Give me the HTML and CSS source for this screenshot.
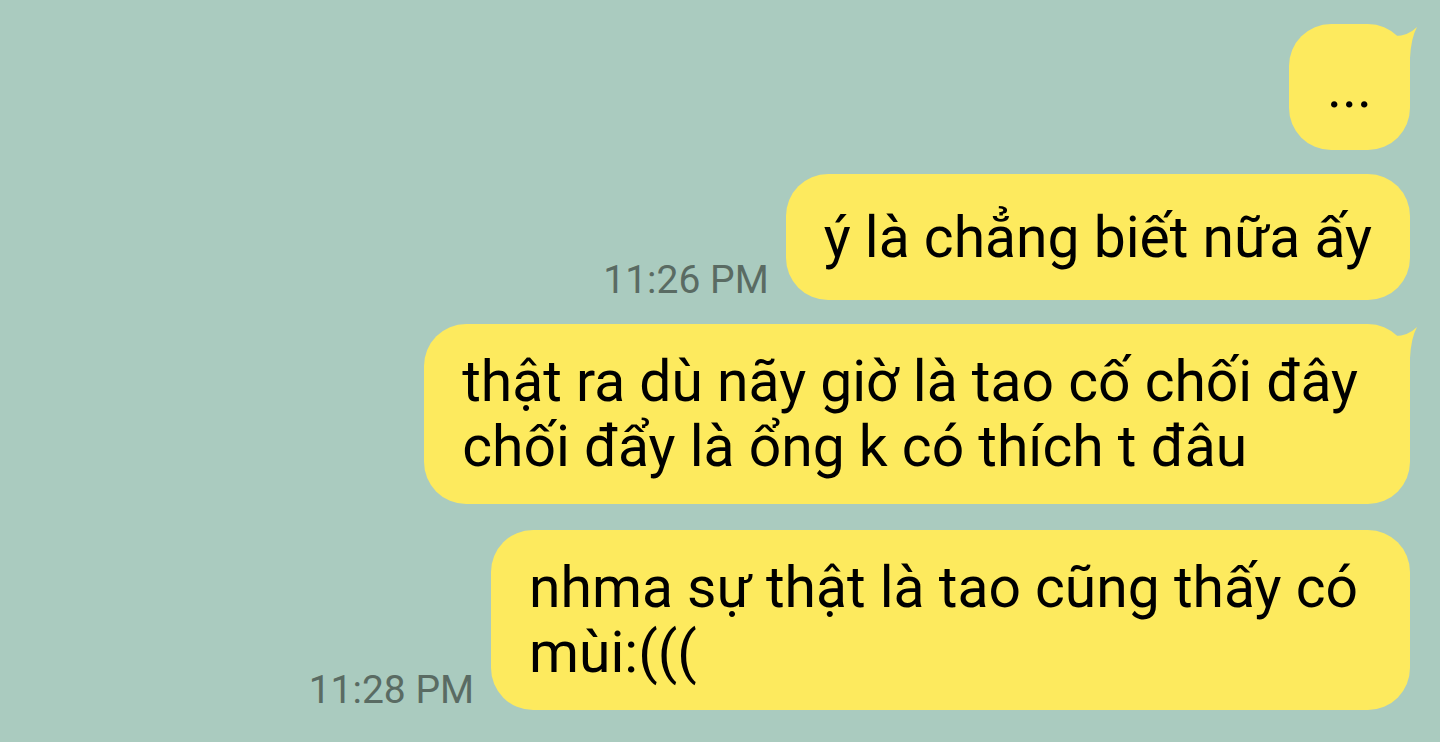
FILE: index.html
```html
<!DOCTYPE html>
<html lang="vi">
<head>
    <meta charset="UTF-8">
    <meta name="viewport" content="width=device-width, initial-scale=1.0">
    <title>Chat</title>
    <link rel="stylesheet" href="styles.css">
</head>
<body>
    <div class="chat">
        <div class="row">
            <div class="bubble">
                <svg class="tail" width="48" height="46" viewBox="0 0 48 46"><path d="M18 16 L25 12 Q38 12 47 3 Q41 14 40 34 L40 44 L18 44 Z"/></svg>
                ...
            </div>
        </div>
        <div class="row">
            <span class="time">11:26 PM</span>
            <div class="bubble">ý là chẳng biết nữa ấy</div>
        </div>
        <div class="row">
            <div class="bubble multi">
                <svg class="tail" width="48" height="46" viewBox="0 0 48 46"><path d="M18 16 L25 12 Q38 12 47 3 Q41 14 40 34 L40 44 L18 44 Z"/></svg>
                thật ra dù nãy giờ là tao cố chối đây<br>chối đẩy là ổng k có thích t đâu
            </div>
        </div>
        <div class="row last">
            <span class="time">11:28 PM</span>
            <div class="bubble multi">nhma sự thật là tao cũng thấy có<br>mùi:(((</div>
        </div>
    </div>
</body>
</html>
```

FILE: styles.css
```css
html, body {
    height: 100%;
}

body {
    margin: 0;
    background: #aacbbf;
    font-family: Roboto, 'Noto Sans', sans-serif;
    overflow: hidden;
}

.chat {
    display: flex;
    flex-direction: column;
    align-items: flex-end;
    gap: 24px;
    padding: 24px 30px 0 0;
}

.row {
    display: flex;
    align-items: flex-end;
    gap: 17px;
}

.row.last {
    margin-top: 2px;
}

.time {
    font-size: 39px;
    line-height: 1;
    color: #5a6b63;
    white-space: nowrap;
}

.bubble {
    position: relative;
    display: flex;
    align-items: center;
    box-sizing: border-box;
    min-height: 126px;
    padding: 25px 38px;
    background: #fdea5e;
    border-radius: 42px;
    color: #000;
    font-size: 57px;
    line-height: 65px;
    white-space: nowrap;
}

.bubble.multi {
    padding-right: 52px;
}

.tail {
    position: absolute;
    top: 0;
    right: -8px;
    fill: #fdea5e;
}
```
